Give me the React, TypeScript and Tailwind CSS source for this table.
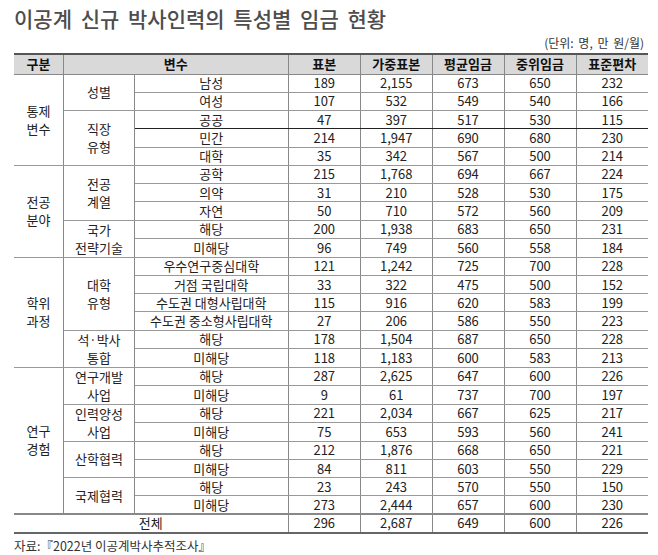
type Row = {
  group?: [string, number];
  sub?: [string, number];
  item: string;
  values: string[];
  dark?: boolean;
};

const rows: Row[] = [
  { group: ["통제\n변수", 5], sub: ["성별", 2], item: "남성", values: ["189", "2,155", "673", "650", "232"] },
  { item: "여성", values: ["107", "532", "549", "540", "166"] },
  { sub: ["직장\n유형", 3], item: "공공", values: ["47", "397", "517", "530", "115"], dark: true },
  { item: "민간", values: ["214", "1,947", "690", "680", "230"] },
  { item: "대학", values: ["35", "342", "567", "500", "214"] },
  { group: ["전공\n분야", 5], sub: ["전공\n계열", 3], item: "공학", values: ["215", "1,768", "694", "667", "224"] },
  { item: "의약", values: ["31", "210", "528", "530", "175"] },
  { item: "자연", values: ["50", "710", "572", "560", "209"] },
  { sub: ["국가\n전략기술", 2], item: "해당", values: ["200", "1,938", "683", "650", "231"] },
  { item: "미해당", values: ["96", "749", "560", "558", "184"] },
  { group: ["학위\n과정", 6], sub: ["대학\n유형", 4], item: "우수연구중심대학", values: ["121", "1,242", "725", "700", "228"] },
  { item: "거점 국립대학", values: ["33", "322", "475", "500", "152"] },
  { item: "수도권 대형사립대학", values: ["115", "916", "620", "583", "199"] },
  { item: "수도권 중소형사립대학", values: ["27", "206", "586", "550", "223"] },
  { sub: ["석·박사\n통합", 2], item: "해당", values: ["178", "1,504", "687", "650", "228"] },
  { item: "미해당", values: ["118", "1,183", "600", "583", "213"] },
  { group: ["연구\n경험", 8], sub: ["연구개발\n사업", 2], item: "해당", values: ["287", "2,625", "647", "600", "226"] },
  { item: "미해당", values: ["9", "61", "737", "700", "197"] },
  { sub: ["인력양성\n사업", 2], item: "해당", values: ["221", "2,034", "667", "625", "217"] },
  { item: "미해당", values: ["75", "653", "593", "560", "241"] },
  { sub: ["산학협력", 2], item: "해당", values: ["212", "1,876", "668", "650", "221"] },
  { item: "미해당", values: ["84", "811", "603", "550", "229"] },
  { sub: ["국제협력", 2], item: "해당", values: ["23", "243", "570", "550", "150"] },
  { item: "미해당", values: ["273", "2,444", "657", "600", "230"] },
];

const headers = ["표본", "가중표본", "평균임금", "중위임금", "표준편차"];
const total = ["296", "2,687", "649", "600", "226"];

function Lines({ text }: { text: string }) {
  return (
    <>
      {text.split("\n").map((line) => (
        <div key={line} className="leading-[18px]">
          {line}
        </div>
      ))}
    </>
  );
}

export default function App() {
  return (
    <div className="min-h-[555px] w-[658px] bg-white px-[14px] pt-[1px] font-['Noto_Sans_CJK_KR',sans-serif] text-[#222]">
      <h1 className="h-[32px] whitespace-nowrap text-[21px] font-medium leading-[34px] text-[#4d4d4d] [word-spacing:4px]">
        이공계 신규 박사인력의 특성별 임금 현황
      </h1>
      <p className="text-right text-[12px] leading-[20px] text-[#333] [word-spacing:2px]">(단위: 명, 만 원/월)</p>

      <table className="w-[634px] table-fixed border-collapse text-center text-[13px]">
        <colgroup>
          <col className="w-[49.5px]" />
          <col className="w-[71px]" />
          <col className="w-[153.5px]" />
          <col className="w-[72.5px]" />
          <col className="w-[71.5px]" />
          <col className="w-[72px]" />
          <col className="w-[72px]" />
          <col className="w-[72px]" />
        </colgroup>
        <thead>
          <tr className="h-[20px] border-t-2 border-t-[#555] bg-[#d9d9d9] font-bold text-[#111]">
            <th className="border-r border-b border-[#888] p-0 leading-[18px]">구분</th>
            <th colSpan={2} className="border-r border-b border-[#888] p-0 leading-[18px]">
              변수
            </th>
            {headers.map((h, i) => (
              <th
                key={h}
                className={`border-b border-[#888] p-0 leading-[18px] ${i < headers.length - 1 ? "border-r" : ""}`}
              >
                {h}
              </th>
            ))}
          </tr>
        </thead>
        <tbody>
          {rows.map((row, ri) => {
            const line = row.dark ? "border-b-[#222]" : "border-b-[#999]";
            return (
              <tr key={ri} className="h-[18.28px]">
                {row.group ? (
                  <td rowSpan={row.group[1]} className="border-r border-b border-r-[#888] border-b-[#999] p-0 align-middle">
                    <Lines text={row.group[0]} />
                  </td>
                ) : null}
                {row.sub ? (
                  <td rowSpan={row.sub[1]} className="border-r border-b border-r-[#888] border-b-[#999] p-0 align-middle">
                    <Lines text={row.sub[0]} />
                  </td>
                ) : null}
                <td className={`border-r border-b border-r-[#888] p-0 leading-[16px] whitespace-nowrap ${line}`}>
                  {row.item}
                </td>
                {row.values.map((v, i) => (
                  <td
                    key={i}
                    className={`border-b p-0 leading-[16px] ${line} ${i < row.values.length - 1 ? "border-r border-r-[#888]" : ""}`}
                  >
                    {v}
                  </td>
                ))}
              </tr>
            );
          })}
          <tr className="h-[18.28px] border-t-2 border-t-[#888] border-b-2 border-b-[#666]">
            <td colSpan={3} className="border-r border-r-[#888] p-0 leading-[16px]">
              전체
            </td>
            {total.map((v, i) => (
              <td key={i} className={`p-0 leading-[16px] ${i < total.length - 1 ? "border-r border-r-[#888]" : ""}`}>
                {v}
              </td>
            ))}
          </tr>
        </tbody>
      </table>

      <p className="mt-[3px] text-[12.5px] leading-[18px] text-[#333]">자료:『2022년 이공계박사추적조사』</p>
    </div>
  );
}
